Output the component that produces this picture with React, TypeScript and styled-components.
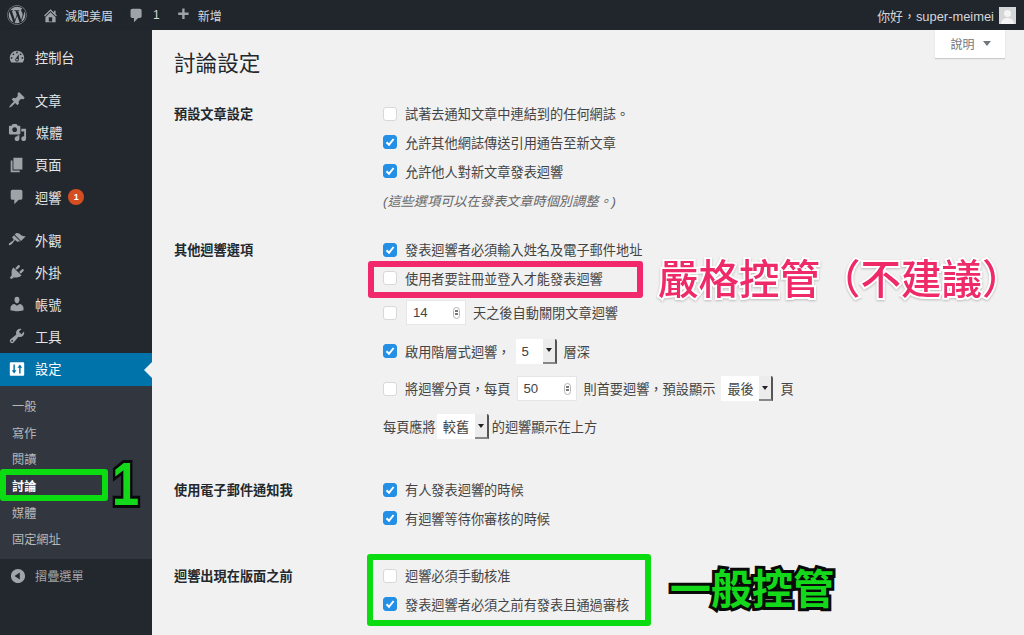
import React from "react"
import styled, { createGlobalStyle } from "styled-components"
import { FaWordpress } from "react-icons/fa"

const GlobalStyle = createGlobalStyle`
    html, body {
        margin: 0;
        padding: 0;
        background: #f1f1f1;
    }
    * {
        box-sizing: border-box;
    }
`

const FONT = `"Liberation Sans", "Noto Sans CJK TC", sans-serif`

const Page = styled.div`
    position: relative;
    width: 1024px;
    height: 635px;
    overflow: hidden;
    display: flex;
    flex-direction: column;
    font-family: ${FONT};
    background: #f1f1f1;
    color: #444;
`

const TopBar = styled.div`
    height: 30px;
    flex: none;
    background: #21252c;
    color: #d5d6d8;
    display: flex;
    align-items: center;
    justify-content: space-between;
    padding: 0 8px 0 7px;
    font-size: 12px;
`

const BarGroup = styled.div`
    display: flex;
    align-items: center;
`

const Greeting = styled.span`
    font-size: 12.9px;
`

const BarItem = styled.div<{ $gap?: number; $left?: number }>`
    display: flex;
    align-items: center;
    column-gap: ${(p) => p.$gap ?? 4}px;
    margin-left: ${(p) => p.$left ?? 0}px;
    color: #d5d6d8;

    svg {
        color: #9ea3a8;
        fill: currentColor;
        flex: none;
    }
`

const Avatar = styled.div`
    width: 17px;
    height: 17px;
    margin-left: 5px;
    background: #d4d6d8;
    display: flex;
    align-items: flex-end;
    justify-content: center;

    svg {
        fill: #f4f4f4;
    }
`

const Body = styled.div`
    flex: 1;
    display: flex;
    min-height: 0;
`

const Sidebar = styled.nav`
    width: 152px;
    flex: none;
    background: #23272e;
    padding-top: 12px;
    display: flex;
    flex-direction: column;
`

const MenuItem = styled.div<{ $active?: boolean; $bottom?: number; $h?: number }>`
    position: relative;
    height: ${(p) => p.$h ?? 32}px;
    margin-bottom: ${(p) => p.$bottom ?? 0}px;
    display: flex;
    align-items: center;
    padding: 0 0 2px 8px;
    column-gap: 9px;
    font-size: 13.2px;
    background: ${(p) => (p.$active ? "#0073aa" : "transparent")};
    color: ${(p) => (p.$active ? "#ffffff" : "#e3e4e5")};

    svg {
        flex: none;
        fill: ${(p) => (p.$active ? "#ffffff" : "#9ea3a8")};
    }

    ${(p) =>
        p.$active &&
        `&::after {
            content: "";
            position: absolute;
            right: 0;
            top: 9px;
            border: 8px solid transparent;
            border-right-color: #f1f1f1;
        }`}
`

const Badge = styled.span`
    width: 16px;
    height: 16px;
    margin-left: -2px;
    border-radius: 50%;
    background: #d54e21;
    color: #fff;
    font-size: 9px;
    font-weight: 700;
    display: flex;
    align-items: center;
    justify-content: center;
`

const SubMenu = styled.div`
    background: #32373f;
    padding: 7px 0 6px;
    display: flex;
    flex-direction: column;
`

const SubItem = styled.div<{ $current?: boolean }>`
    height: 26.6px;
    display: flex;
    align-items: center;
    padding-left: 12px;
    font-size: 12.2px;
    font-weight: ${(p) => (p.$current ? 700 : 400)};
    color: ${(p) => (p.$current ? "#ffffff" : "#b4b9be")};
`

const Collapse = styled.div`
    height: 34px;
    display: flex;
    align-items: center;
    column-gap: 8px;
    padding-left: 9px;
    font-size: 12.2px;
    color: #a0a5aa;

    svg {
        fill: #a0a5aa;
    }
`

const Content = styled.main`
    flex: 1;
    padding: 19px 0 0 22px;
    position: relative;
    min-width: 0;
`

const HelpTab = styled.div`
    position: absolute;
    top: 0;
    right: 19px;
    width: 70px;
    height: 28px;
    padding: 0 0 2px 1px;
    background: #fff;
    box-shadow: 0 1px 1px rgba(0, 0, 0, 0.16);
    color: #72777c;
    font-size: 12px;
    display: flex;
    align-items: center;
    justify-content: center;
    column-gap: 8px;
`

const Caret = styled.span`
    width: 0;
    height: 0;
    border: 4px solid transparent;
    border-top: 5px solid #72777c;
    border-bottom: 0;
`

const Title = styled.h1`
    margin: 0 0 21px;
    height: 30px;
    line-height: 30px;
    font-size: 21.6px;
    font-weight: 400;
    color: #23282d;
`

const Section = styled.section<{ $bottom?: number }>`
    display: grid;
    grid-template-columns: 209px 1fr;
    margin-bottom: ${(p) => p.$bottom ?? 0}px;
`

const SectionLabel = styled.div`
    height: 28px;
    line-height: 30px;
    font-size: 13.2px;
    font-weight: 700;
    color: #23282d;
`

const Fields = styled.div`
    display: flex;
    flex-direction: column;
`

const Row = styled.div<{ $h?: number }>`
    height: ${(p) => p.$h ?? 29}px;
    padding-bottom: 1px;
    display: flex;
    align-items: center;
    font-size: 13.2px;
    color: #444;
    white-space: nowrap;
`

const Note = styled(Row)`
    font-style: italic;
    color: #666;
`

const Box = styled.span<{ $on?: boolean }>`
    width: 14px;
    height: 14px;
    flex: none;
    margin-right: 8px;
    border-radius: 3px;
    background: ${(p) => (p.$on ? "#2390e6" : "#fff")};
    border: 1px solid ${(p) => (p.$on ? "#2390e6" : "#d8d8d8")};
    display: flex;
    align-items: center;
    justify-content: center;

    svg {
        fill: none;
        stroke: #fff;
        stroke-width: 2;
    }
`

const NumberField = styled.span<{ $left: number; $right: number }>`
    width: 60px;
    height: 25px;
    flex: none;
    margin: 0 ${(p) => p.$right}px 0 ${(p) => p.$left}px;
    background: #fff;
    border: 1px solid #e6e6e6;
    display: flex;
    align-items: center;
    justify-content: space-between;
    padding: 0 5px 0 6px;
    font-size: 13.2px;
    color: #444;
`

const Spinner = styled.span`
    width: 7px;
    height: 12px;
    border: 1px solid #b5b5b5;
    border-radius: 4px;
    display: flex;
    flex-direction: column;
    align-items: center;
    justify-content: center;
    row-gap: 1px;

    &::before,
    &::after {
        content: "";
        width: 3px;
        height: 2px;
        background: #777;
    }
`

const Select = styled.span<{ $w: number; $left: number; $right: number }>`
    width: ${(p) => p.$w}px;
    height: 25px;
    flex: none;
    margin: 0 ${(p) => p.$right}px 0 ${(p) => p.$left}px;
    background: #fff;
    display: flex;
    align-items: center;
    justify-content: space-between;
    padding-left: 6px;
    font-size: 13.2px;
    color: #444;
`

const SelectArrow = styled.span`
    width: 14px;
    height: 100%;
    background: #ececec;
    border-right: 2px solid #555;
    border-bottom: 2px solid #888;
    border-top-right-radius: 2px;
    display: flex;
    align-items: center;
    justify-content: center;

    &::before {
        content: "";
        border: 3px solid transparent;
        border-top: 4px solid #222;
        border-bottom: 0;
    }
`

const Frame = styled.div<{ $x: number; $y: number; $w: number; $h: number; $color: string }>`
    position: absolute;
    left: ${(p) => p.$x}px;
    top: ${(p) => p.$y}px;
    width: ${(p) => p.$w}px;
    height: ${(p) => p.$h}px;
    border: 6px solid ${(p) => p.$color};
    border-radius: 3px;
    pointer-events: none;
`

const Callout = styled.div<{ $x: number; $y: number; $size: number; $fill: string; $stroke: string; $sw: number; $weight?: number }>`
    position: absolute;
    left: ${(p) => p.$x}px;
    top: ${(p) => p.$y}px;
    font-size: ${(p) => p.$size}px;
    line-height: 1;
    font-weight: ${(p) => p.$weight ?? 700};
    white-space: nowrap;
    color: ${(p) => p.$fill};
    -webkit-text-stroke: ${(p) => p.$sw}px ${(p) => p.$stroke};
    paint-order: stroke fill;
`

const ShadowCallout = styled(Callout)`
    filter: drop-shadow(0 1px 1px rgba(0, 0, 0, 0.22));
`

const Digit = styled(Callout)`
    transform: scaleX(0.8);
    transform-origin: left top;
`

const Icon: React.FC<{ d: string; size?: number; evenOdd?: boolean }> = ({ d, size = 20, evenOdd }) => (
    <svg width={size} height={size} viewBox="0 0 20 20">
        <path d={d} fillRule={evenOdd ? "evenodd" : undefined} />
    </svg>
)

const Check: React.FC<{ on?: boolean }> = ({ on }) => (
    <Box $on={on}>
        {on && (
            <svg width="10" height="10" viewBox="0 0 10 10">
                <path d="M1.5 5.2 L4 7.8 L8.6 2" />
            </svg>
        )}
    </Box>
)

const ICONS = {
    home: "M16 8.5l1.53 1.53-1.06 1.06L10 4.62l-6.47 6.47-1.06-1.06L10 2.5l4 4v-2h2v4zm-6-2.46l6 5.99V18H4v-5.97zM12 17v-5H8v5h4z",
    comment: "M5 2h9c1.1 0 2 .9 2 2v7c0 1.1-.9 2-2 2h-2l-5 5v-5H5c-1.1 0-2-.9-2-2V4c0-1.1.9-2 2-2z",
    plus: "M17 7v3h-5v5H9v-5H4V7h5V2h3v5h5z",
    dashboard: "M3.76 16h12.48c1.1-1.37 1.76-3.11 1.76-5 0-4.42-3.58-8-8-8s-8 3.58-8 8c0 1.89.66 3.63 1.76 5zM10 4c.55 0 1 .45 1 1s-.45 1-1 1-1-.45-1-1 .45-1 1-1zM6 6c.55 0 1 .45 1 1s-.45 1-1 1-1-.45-1-1 .45-1 1-1zm8 0c.55 0 1 .45 1 1s-.45 1-1 1-1-.45-1-1 .45-1 1-1zm-5.37 5.55L12 7v6c0 1.1-.9 2-2 2s-2-.9-2-2c0-.57.24-1.08.63-1.45zM4 10c.55 0 1 .45 1 1s-.45 1-1 1-1-.45-1-1 .45-1 1-1zm12 0c.55 0 1 .45 1 1s-.45 1-1 1-1-.45-1-1 .45-1 1-1zm-5 3c0-.55-.45-1-1-1s-1 .45-1 1 .45 1 1 1 1-.45 1-1z",
    post: "M10.44 3.02l1.82-1.82 6.36 6.35-1.83 1.82c-1.05-.68-2.48-.57-3.41.36l-.75.75c-.92.93-1.04 2.35-.35 3.41l-1.83 1.82-2.41-2.41-2.8 2.79c-.42.42-3.38 2.71-3.8 2.29s1.86-3.39 2.28-3.81l2.79-2.79L4.1 9.36l1.83-1.82c1.05.69 2.48.57 3.41-.36l.75-.75c.93-.92 1.04-2.35.35-3.41z",
    media: "M13 11V4c0-.55-.45-1-1-1h-1.67L9 1H5L3.67 3H2c-.55 0-1 .45-1 1v7c0 .55.45 1 1 1h10c.55 0 1-.45 1-1zM7 4.5c1.38 0 2.5 1.12 2.5 2.5S8.38 9.5 7 9.5 4.5 8.38 4.5 7 5.62 4.5 7 4.5zM14 6h5v10.5c0 1.38-1.12 2.5-2.5 2.5S14 17.88 14 16.5s1.12-2.5 2.5-2.5c.17 0 .34.02.5.05V9h-3V6zm-4 8.05V13h2v3.5c0 1.38-1.12 2.5-2.5 2.5S7 17.88 7 16.5 8.12 14 9.5 14c.17 0 .34.02.5.05z",
    page: "M6 15V2h10v13H6zm-1 1h8v2H3V5h2v11z",
    brush: "M14.48 11.06L7.41 3.99l1.5-1.5c.5-.56 2.3-.47 3.51.32 1.21.8 1.43 1.28 2.91 2.1 1.18.64 2.45 1.26 4.45.85zm-.71.71L6.7 4.7 4.93 6.47c-.39.39-.39 1.02 0 1.41l1.06 1.06c.39.39.39 1.03 0 1.42-.6.6-1.43 1.11-2.21 1.69-.35.26-.7.53-1.01.84C1.43 13.23.4 14.85 1.1 15.55c.7.7 2.33-.33 3.67-1.67.31-.31.58-.66.84-1.01.58-.78 1.09-1.61 1.69-2.21.39-.39 1.02-.39 1.41 0l1.06 1.06c.39.39 1.02.39 1.41 0z",
    plugin: "M13.11 4.36L9.87 7.6 8 5.73l3.24-3.24c.35-.34 1.05-.2 1.56.32.52.51.66 1.21.31 1.55zm-8 1.77l.91-1.12 9.01 9.01-1.19.84c-.71.71-2.63 1.16-3.82 1.16H6.14L4.9 17.26c-.59.59-1.54.59-2.12 0-.59-.58-.59-1.53 0-2.12l1.24-1.24v-3.88c0-1.13.4-3.19 1.09-3.89zm7.26 3.97l3.24-3.24c.34-.35 1.04-.21 1.55.31.52.51.66 1.21.31 1.55l-3.24 3.25z",
    user: "M10 9.25c-2.27 0-2.73-3.44-2.73-3.44C7 4.02 7.82 2 9.97 2c2.16 0 2.98 2.02 2.71 3.81 0 0-.41 3.44-2.68 3.44zm0 2.57L12.72 10c2.39 0 4.52 2.33 4.52 4.53v2.49s-3.65 1.13-7.24 1.13c-3.65 0-7.24-1.13-7.24-1.13v-2.49c0-2.25 1.94-4.48 4.47-4.48z",
    tools: "M16.68 9.77c-1.34 1.34-3.3 1.67-4.95.99l-5.41 6.52c-.99.99-2.59.99-3.58 0s-.99-2.59 0-3.57l6.52-5.42c-.68-1.65-.35-3.61.99-4.95 1.28-1.28 3.12-1.62 4.72-1.06l-2.89 2.89 2.82 2.82 2.86-2.87c.53 1.58.18 3.39-1.08 4.65zM3.81 16.21c.4.39 1.04.39 1.43 0 .4-.4.4-1.04 0-1.43-.39-.4-1.03-.4-1.43 0-.39.39-.39 1.03 0 1.43z",
    settings: "M3 2.5h14a1 1 0 0 1 1 1v13a1 1 0 0 1-1 1H3a1 1 0 0 1-1-1v-13a1 1 0 0 1 1-1zM6 5h1.6v6.5h1.9L6.8 15 4.1 11.5H6zM12.4 15H14V8.5h1.9L13.2 5l-2.7 3.5h1.9z",
    collapse: "M10 2.16c4.33 0 7.84 3.51 7.84 7.84s-3.51 7.84-7.84 7.84S2.16 14.33 2.16 10 5.71 2.16 10 2.16zm2 11.72V6.12L6.18 9.97z",
}

const App: React.FC = () => {
    return (
        <Page lang="zh-Hant">
            <GlobalStyle />
            <TopBar>
                <BarGroup>
                    <BarItem>
                        <FaWordpress size={20} />
                    </BarItem>
                    <BarItem $left={15} $gap={6}>
                        <Icon d={ICONS.home} size={17} />
                        減肥美眉
                    </BarItem>
                    <BarItem $left={15} $gap={8}>
                        <Icon d={ICONS.comment} size={17} />
                        1
                    </BarItem>
                    <BarItem $left={15} $gap={7}>
                        <Icon d={ICONS.plus} size={16} />
                        新增
                    </BarItem>
                </BarGroup>
                <BarGroup>
                    <Greeting>{"你好\uFF0Csuper-meimei"}</Greeting>
                    <Avatar>
                        <svg width="13" height="15" viewBox="0 0 13 15">
                            <circle cx="6.5" cy="4.5" r="3.5" />
                            <path d="M0 15c0-4 3-6 6.5-6s6.5 2 6.5 6z" />
                        </svg>
                    </Avatar>
                </BarGroup>
            </TopBar>
            <Body>
                <Sidebar>
                    <MenuItem $bottom={11}>
                        <Icon d={ICONS.dashboard} size={18} />
                        控制台
                    </MenuItem>
                    <MenuItem>
                        <Icon d={ICONS.post} size={18} />
                        文章
                    </MenuItem>
                    <MenuItem>
                        <Icon d={ICONS.media} size={19} />
                        媒體
                    </MenuItem>
                    <MenuItem $h={33}>
                        <Icon d={ICONS.page} size={18} />
                        頁面
                    </MenuItem>
                    <MenuItem $bottom={11}>
                        <Icon d={ICONS.comment} size={18} />
                        迴響
                        <Badge>1</Badge>
                    </MenuItem>
                    <MenuItem>
                        <Icon d={ICONS.brush} size={18} />
                        外觀
                    </MenuItem>
                    <MenuItem>
                        <Icon d={ICONS.plugin} size={18} />
                        外掛
                    </MenuItem>
                    <MenuItem>
                        <Icon d={ICONS.user} size={18} />
                        帳號
                    </MenuItem>
                    <MenuItem>
                        <Icon d={ICONS.tools} size={18} />
                        工具
                    </MenuItem>
                    <MenuItem $active $h={33}>
                        <Icon d={ICONS.settings} size={18} evenOdd />
                        設定
                    </MenuItem>
                    <SubMenu>
                        <SubItem>一般</SubItem>
                        <SubItem>寫作</SubItem>
                        <SubItem>閱讀</SubItem>
                        <SubItem $current>討論</SubItem>
                        <SubItem>媒體</SubItem>
                        <SubItem>固定網址</SubItem>
                    </SubMenu>
                    <Collapse>
                        <Icon d={ICONS.collapse} size={18} />
                        摺疊選單
                    </Collapse>
                </Sidebar>
                <Content>
                    <HelpTab>
                        說明
                        <Caret />
                    </HelpTab>
                    <Title>討論設定</Title>
                    <Section $bottom={21}>
                        <SectionLabel>預設文章設定</SectionLabel>
                        <Fields>
                            <Row $h={28}>
                                <Check />
                                試著去通知文章中連結到的任何網誌。
                            </Row>
                            <Row>
                                <Check on />
                                允許其他網誌傳送引用通告至新文章
                            </Row>
                            <Row>
                                <Check on />
                                允許他人對新文章發表迴響
                            </Row>
                            <Note>(這些選項可以在發表文章時個別調整。)</Note>
                        </Fields>
                    </Section>
                    <Section $bottom={30}>
                        <SectionLabel>其他迴響選項</SectionLabel>
                        <Fields>
                            <Row $h={28}>
                                <Check on />
                                發表迴響者必須輸入姓名及電子郵件地址
                            </Row>
                            <Row>
                                <Check />
                                使用者要註冊並登入才能發表迴響
                            </Row>
                            <Row $h={40}>
                                <Check />
                                <NumberField $left={1} $right={7}>
                                    14
                                    <Spinner />
                                </NumberField>
                                天之後自動關閉文章迴響
                            </Row>
                            <Row $h={37}>
                                <Check on />
                                {"啟用階層式迴響\uFF0C"}
                                <Select $w={41} $left={5} $right={7}>
                                    5
                                    <SelectArrow />
                                </Select>
                                層深
                            </Row>
                            <Row $h={38}>
                                <Check />
                                {"將迴響分頁\uFF0C每頁"}
                                <NumberField $left={6} $right={7}>
                                    50
                                    <Spinner />
                                </NumberField>
                                {"則首要迴響\uFF0C預設顯示"}
                                <Select $w={52} $left={6} $right={7}>
                                    最後
                                    <SelectArrow />
                                </Select>
                                頁
                            </Row>
                            <Row $h={38}>
                                每頁應將
                                <Select $w={52} $left={1} $right={3}>
                                    較舊
                                    <SelectArrow />
                                </Select>
                                的迴響顯示在上方
                            </Row>
                        </Fields>
                    </Section>
                    <Section $bottom={29}>
                        <SectionLabel>使用電子郵件通知我</SectionLabel>
                        <Fields>
                            <Row $h={28}>
                                <Check on />
                                有人發表迴響的時候
                            </Row>
                            <Row>
                                <Check on />
                                有迴響等待你審核的時候
                            </Row>
                        </Fields>
                    </Section>
                    <Section>
                        <SectionLabel>迴響出現在版面之前</SectionLabel>
                        <Fields>
                            <Row $h={28}>
                                <Check />
                                迴響必須手動核准
                            </Row>
                            <Row>
                                <Check on />
                                發表迴響者必須之前有發表且通過審核
                            </Row>
                        </Fields>
                    </Section>
                </Content>
            </Body>

            <Frame $x={368} $y={261} $w={275} $h={37} $color="#f2286c" />
            <ShadowCallout $x={658} $y={260} $size={40.5} $fill="#ee2a68" $stroke="#ffffff" $sw={4} $weight={500}>
                {"嚴格控管\uFF08不建議\uFF09"}
            </ShadowCallout>
            <Frame $x={367} $y={554} $w={284} $h={72} $color="#0bdc12" />
            <Callout $x={670} $y={570} $size={41} $fill="#14d81a" $stroke="#0a0a0a" $sw={6}>
                一般控管
            </Callout>
            <Frame $x={0} $y={469} $w={108} $h={32} $color="#0bdc12" />
            <Digit $x={112} $y={454} $size={61} $fill="#14d81a" $stroke="#0a0a0a" $sw={6}>
                1
            </Digit>
        </Page>
    )
}

export default App
